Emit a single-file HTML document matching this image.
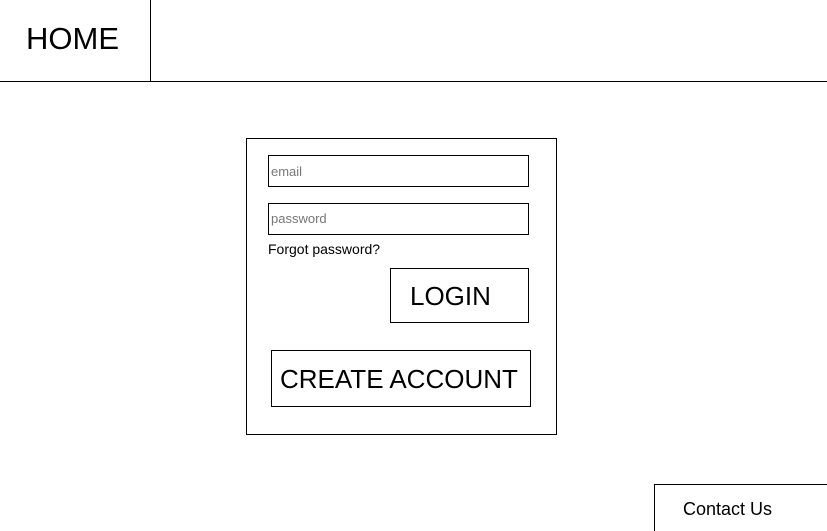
<!DOCTYPE html>
<html><head><meta charset="utf-8"><style>
*{margin:0;padding:0;box-sizing:border-box}
html,body{width:827px;height:531px;overflow:hidden}
body{background:#fff;position:relative;font-family:"Liberation Sans",sans-serif;color:#000}
.a{position:absolute}
.b{border:1px solid #000}
</style></head><body>
<div class="a" style="left:0;top:81px;width:827px;height:1px;background:#000"></div>
<div class="a" style="left:150px;top:0;width:1px;height:81px;background:#000"></div>
<div class="a" style="left:26px;top:21px;font-size:31px;line-height:36px">HOME</div>

<div class="a b" style="left:246px;top:138px;width:311px;height:297px"></div>
<div class="a b" style="left:268px;top:155px;width:261px;height:32px"></div>
<div class="a" style="left:271px;top:164px;font-size:13px;color:#777">email</div>
<div class="a b" style="left:268px;top:203px;width:261px;height:32px"></div>
<div class="a" style="left:271px;top:211px;font-size:13px;color:#777">password</div>
<div class="a" style="left:268px;top:241px;font-size:14px">Forgot password?</div>

<div class="a b" style="left:390px;top:268px;width:139px;height:55px"></div>
<div class="a" style="left:410px;top:281px;font-size:26px;line-height:30px">LOGIN</div>

<div class="a b" style="left:271px;top:350px;width:260px;height:57px"></div>
<div class="a" style="left:280px;top:364px;font-size:26px;line-height:30px">CREATE ACCOUNT</div>

<div class="a b" style="left:654px;top:484px;width:180px;height:47px;border-bottom:none"></div>
<div class="a" style="left:683px;top:499px;font-size:18px;line-height:20px">Contact Us</div>
</body></html>
